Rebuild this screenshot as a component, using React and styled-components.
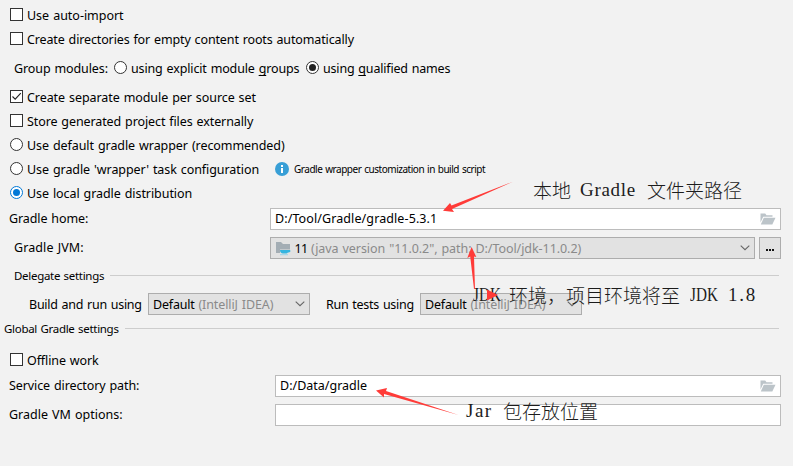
import React from "react";
import styled, { createGlobalStyle } from "styled-components";

const GlobalStyle = createGlobalStyle`
  * { box-sizing: border-box; }
  body { margin: 0; background: #f2f2f2; overflow: hidden; }
`;

const Page = styled.main`
  position: relative;
  width: 793px;
  height: 466px;
  padding-top: 3px;
  background: #f2f2f2;
  color: #000;
  font: 12.5px/18px "Noto Sans", "Noto Sans CJK SC", sans-serif;
  white-space: pre;
`;

const OptionRow = styled.div`
  display: flex;
  align-items: center;
  height: 23px;
  margin-bottom: 1px;
  padding-left: 10px;
`;

const GroupRow = styled(OptionRow)`
  height: 33px;
  padding-left: 14px;
`;

const FieldRow = styled.div`
  display: flex;
  align-items: center;
  height: 22px;
  margin-top: ${(p) => p.$gap || 0}px;
  padding-right: 12px;
  padding-left: ${(p) => p.$indent || 9}px;
`;

const Text = styled.span`
  flex: none;
  width: ${(p) => (p.$width ? p.$width + "px" : "auto")};
  padding-top: ${(p) => p.$drop || 0}px;
  font-size: ${(p) => p.$size || 12.5}px;
  letter-spacing: ${(p) => p.$track ?? -0.1}px;
  word-spacing: 0.8px;
  color: ${(p) => (p.$muted ? "#8a8a8a" : "#000")};
`;

const OptionText = styled(Text)`
  padding-top: 3px;
`;

const RunLabel = styled(Text)`
  margin-left: 16px;
`;

const Mnemonic = styled.span`
  text-decoration: underline;
  text-underline-offset: 2px;
  text-decoration-skip-ink: none;
`;

const Checkbox = styled.span`
  display: flex;
  flex: none;
  width: 13px;
  height: 13px;
  margin-right: 4px;
  border: 1px solid #333;
  background: #fff;
`;

const Radio = styled.span`
  display: flex;
  align-items: center;
  justify-content: center;
  flex: none;
  width: 13px;
  height: 13px;
  margin: 0 4px 0 ${(p) => p.$before || 0}px;
  border: 1px solid ${(p) => (p.$accent ? "#0078d7" : "#333")};
  border-radius: 50%;
  background: #fff;

  &::after {
    content: "";
    display: ${(p) => (p.$on ? "block" : "none")};
    width: 7px;
    height: 7px;
    border-radius: 50%;
    background: ${(p) => (p.$accent ? "#0078d7" : "#222")};
  }
`;

const Input = styled.div`
  display: flex;
  flex: 1;
  align-items: center;
  justify-content: space-between;
  height: 22px;
  padding: 0 4px;
  border: 1px solid #bcbcbc;
  background: #fff;
`;

const Combo = styled.div`
  display: flex;
  flex: ${(p) => (p.$width ? "none" : 1)};
  align-items: center;
  width: ${(p) => (p.$width ? p.$width + "px" : "auto")};
  height: 22px;
  padding: 0 4px;
  border: 1px solid #adadad;
  background: #e2e2e2;

  & > svg:last-child { margin-left: auto; }
`;

const MoreButton = styled.div`
  display: flex;
  align-items: center;
  justify-content: center;
  gap: 1px;
  width: 22px;
  height: 22px;
  margin-left: 4px;
  padding-top: 4px;
  border: 1px solid #adadad;
  background: #e2e2e2;
`;

const Dot = styled.i`
  width: 2px;
  height: 2px;
  background: #111;
`;

const Section = styled.div`
  display: flex;
  align-items: center;
  height: 19px;
  margin-top: ${(p) => p.$gap}px;
  padding: 0 14px 0 ${(p) => p.$indent}px;
`;

const Rule = styled.span`
  flex: 1;
  height: 1px;
  background: #cdcdcd;
`;

const OfflineBlock = styled.div`
  padding-top: 10px;
`;

const InfoIcon = styled.svg`
  flex: none;
  margin: 0 5px 0 auto;
`;

const WrapperOption = styled.div`
  display: flex;
  align-items: center;
  width: 284px;
`;

const Note = styled.div`
  position: absolute;
  display: flex;
  left: ${(p) => p.$x}px;
  top: ${(p) => p.$y}px;
  height: 24px;
  color: #1c1c1c;
  line-height: 24px;
`;

const Han = styled.span`
  font-family: "Noto Sans CJK SC", sans-serif;
  font-size: 19px;
  font-weight: 300;
`;

const Latin = styled.span`
  flex: none;
  width: ${(p) => p.$width}px;
  margin-right: ${(p) => p.$after || 0}px;
  margin-left: ${(p) => p.$before || 0}px;
  font-family: "Liberation Serif", serif;
  font-size: 19px;
  letter-spacing: ${(p) => p.$track || 0}px;
  transform: scaleX(${(p) => p.$condense || 1});
  transform-origin: left;
`;

const Arrows = styled.svg`
  position: absolute;
  left: 0;
  top: 0;
  pointer-events: none;
`;

const Check = () => (
  <svg width="11" height="11" viewBox="0 0 11 11">
    <path d="M1.5 5.5 4.2 8.2 9.8 2.2" fill="none" stroke="#222" strokeWidth="1.1" />
  </svg>
);

const Chevron = () => (
  <svg width="10" height="6" viewBox="0 0 10 6">
    <path d="M.7.7 5 4.7 9.3.7" fill="none" stroke="#666" strokeWidth="1.1" />
  </svg>
);

const FolderOpen = () => (
  <svg width="16" height="12" viewBox="0 0 16 12">
    <path d="M.5.5h4.7l1.3 1.7h6v1.6H3.2L.5 9.5z" fill="#bcc4c9" />
    <path d="M3.8 4.8H15.5L12.3 11.5H.8z" fill="#bcc4c9" />
  </svg>
);

const JdkIcon = () => (
  <svg width="16" height="16" viewBox="0 0 16 16">
    <path d="M1 2h5l2 2h7v5.5H5V13H1z" fill="#a3adb4" />
    <path d="M5 10h9.2c1.8 0 1.6 2.4-.6 2.4h-.8c-.4.8-1 1.1-1.8 1.1H8c-1.8 0-3-1.4-3-3.5z" fill="#35b5e0" />
    <path d="M5 14.2h8v1H5z" fill="#9bd5ea" />
  </svg>
);

const CheckRow = ({ label, track, on }) => (
  <OptionRow>
    <Checkbox>{on && <Check />}</Checkbox>
    <OptionText $track={track}>{label}</OptionText>
  </OptionRow>
);

const TargetCombo = () => (
  <Combo $width={162}>
    <Text $drop={2} $track={-0.2}>Default </Text>
    <Text $drop={2} $muted>(IntelliJ IDEA)</Text>
    <Chevron />
  </Combo>
);

export default function App() {
  return (
    <>
      <GlobalStyle />
      <Page>
        <CheckRow label="Use auto-import" track={-0.02} />
        <CheckRow label="Create directories for empty content roots automatically" track={-0.13} />
        <GroupRow>
          <Text $drop={2} $width={94}>Group modules:</Text>
          <Radio $before={6} />
          <Text $drop={2} $width={175} $track={-0.14}>using explicit module <Mnemonic>g</Mnemonic>roups</Text>
          <Radio $on />
          <Text $drop={2} $track={-0.18}>using <Mnemonic>q</Mnemonic>ualified names</Text>
        </GroupRow>
        <CheckRow label="Create separate module per source set" track={-0.07} on />
        <CheckRow label="Store generated project files externally" track={-0.1} />
        <OptionRow>
          <Radio />
          <OptionText $track={-0.07}>Use default gradle wrapper (recommended)</OptionText>
        </OptionRow>
        <OptionRow>
          <WrapperOption>
            <Radio />
            <OptionText $track={-0.07}>Use gradle 'wrapper' task configuration</OptionText>
            <InfoIcon width="14" height="14" viewBox="0 0 14 14">
              <circle cx="7" cy="7" r="7" fill="#389fd6" />
              <path d="M6 3h2v2H6zM6 6h2v5H6z" fill="#fff" />
            </InfoIcon>
          </WrapperOption>
          <Text $size={10} $track={-0.48}>Gradle wrapper customization in build script</Text>
        </OptionRow>
        <OptionRow>
          <Radio $on $accent />
          <OptionText $track={-0.07}>Use local gradle distribution</OptionText>
        </OptionRow>

        <FieldRow $gap={4}>
          <Text $width={261}>Gradle home:</Text>
          <Input>
            <Text $track={0.1}>D:/Tool/Gradle/gradle-5.3.1</Text>
            <FolderOpen />
          </Input>
        </FieldRow>
        <FieldRow $gap={7} $indent={14}>
          <Text $width={256} $track={0.1}>Gradle JVM:</Text>
          <Combo>
            <JdkIcon />
            <Text $drop={2} $track={-0.6}> 11 </Text>
            <Text $drop={2} $muted $track={-0.06}>(java version "11.0.2", path: D:/Tool/jdk-11.0.2)</Text>
            <Chevron />
          </Combo>
          <MoreButton><Dot /><Dot /><Dot /></MoreButton>
        </FieldRow>

        <Section $gap={7} $indent={14}>
          <Text $size={11.5} $width={96} $track={-0.3}>Delegate settings</Text>
          <Rule />
        </Section>
        <FieldRow $gap={8} $indent={29}>
          <Text $drop={2} $width={119} $track={-0.25}>Build and run using</Text>
          <TargetCombo />
          <RunLabel $drop={2} $width={94} $track={-0.25}>Run tests using</RunLabel>
          <TargetCombo />
        </FieldRow>
        <Section $gap={4} $indent={4}>
          <Text $size={11.5} $width={121} $track={-0.3}>Global Gradle settings</Text>
          <Rule />
        </Section>
        <OfflineBlock>
          <CheckRow label="Offline work" />
        </OfflineBlock>
        <FieldRow $gap={4}>
          <Text $width={266}>Service directory path:</Text>
          <Input>
            <Text $track={0}>D:/Data/gradle</Text>
            <FolderOpen />
          </Input>
        </FieldRow>
        <FieldRow $gap={7}>
          <Text $width={266} $track={0}>Gradle VM options:</Text>
          <Input />
        </FieldRow>

        <Note $x={533} $y={178}>
          <Han>本地</Han>
          <Latin $before={9} $width={57} $after={10} $track={0.7}>Gradle</Latin>
          <Han>文件夹路径</Han>
        </Note>
        <Note $x={473} $y={283}>
          <Latin $width={28} $after={8} $condense={0.8}>JDK</Latin>
          <Han>环境，项目环境将至</Han>
          <Latin $before={10} $width={28} $after={10} $condense={0.8}>JDK</Latin>
          <Latin $width={28} $track={1.8}>1.8</Latin>
        </Note>
        <Note $x={466} $y={399}>
          <Latin $width={29} $after={8} $track={1.5}>Jar</Latin>
          <Han>包存放位置</Han>
        </Note>

        <Arrows width="793" height="466" viewBox="0 0 793 466" fill="#ff3b38">
          <path d="M443 210.7 450 203 451.5 205.5 513.5 181.5 452 209 454 212z" />
          <path d="M471.6 247 476.3 257 474 256.5 475 289 474 289 470.2 256.5 467.3 258z" />
          <path d="M487 289.5 498 295 487 300.5z" />
          <path d="M376 390.5 387 388 386 391 458.5 415 384 394 384 397.5z" />
        </Arrows>
      </Page>
    </>
  );
}
